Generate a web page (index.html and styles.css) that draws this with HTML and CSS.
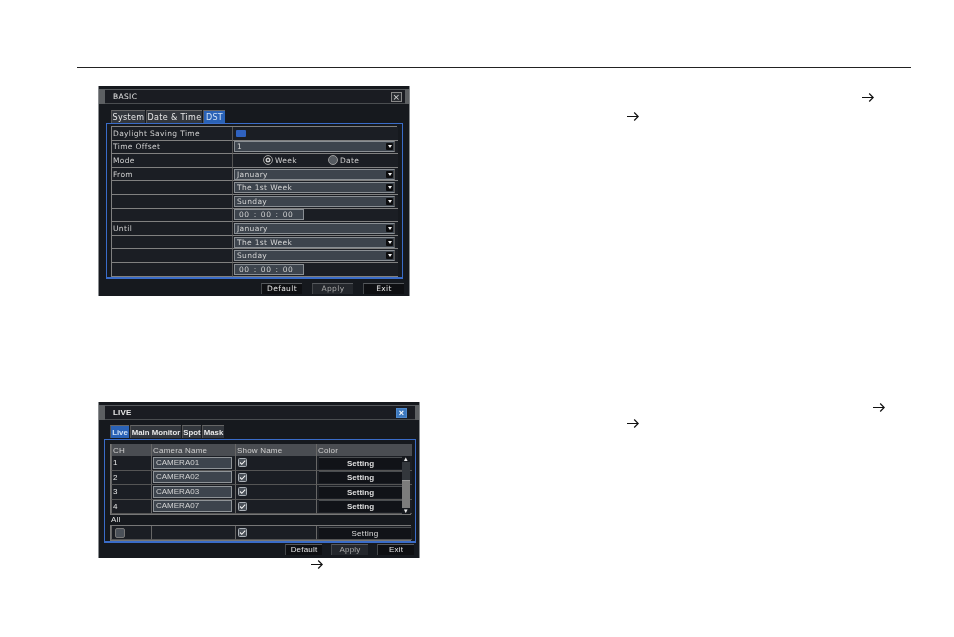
FILE: index.html
```html
<!DOCTYPE html>
<html lang="en">
<head>
  <meta charset="UTF-8">
  <title>BASIC / LIVE</title>
  <link rel="stylesheet" href="styles.css">
</head>
<body>

  <svg class="defs" width="0" height="0">
    <symbol id="arrow" viewBox="0 0 12 11">
      <path d="M0 5.5H11M7.2 1.5L11.2 5.5L7.2 9.5" fill="none" stroke="#111" stroke-width="1.2"/>
    </symbol>
    <symbol id="tick" viewBox="0 0 9 9">
      <rect x="0.5" y="0.5" width="8" height="8" rx="1" fill="#4a5058" stroke="#aab0b6"/>
      <path d="M2 4.5L3.8 6.3L7.2 2.6" fill="none" stroke="#f2f2f2" stroke-width="1.1"/>
    </symbol>
  </svg>

  <div class="rule"></div>

  <section class="entry entry-basic">
    <div class="dvr dvr-basic">
      <div class="titlebar"><span>BASIC</span><span class="close">×</span></div>
      <div class="tabs">
        <span class="tab tab-system">System</span>
        <span class="tab tab-date">Date &amp; Time</span>
        <span class="tab tab-dst active">DST</span>
      </div>
      <div class="frame">
        <div class="form">
          <div class="cell">Daylight Saving Time</div><div class="cell"><span class="check-on"></span></div>
          <div class="cell">Time Offset</div><div class="cell"><span class="select">1</span></div>
          <div class="cell">Mode</div>
          <div class="cell radios">
            <span class="radio selected"></span><span class="radio-label">Week</span>
            <span class="radio radio-date"></span><span class="radio-label">Date</span>
          </div>
          <div class="cell">From</div><div class="cell"><span class="select">January</span></div>
          <div class="cell"></div><div class="cell"><span class="select">The 1st Week</span></div>
          <div class="cell"></div><div class="cell"><span class="select">Sunday</span></div>
          <div class="cell"></div><div class="cell"><span class="time">00 : 00 : 00</span></div>
          <div class="cell">Until</div><div class="cell"><span class="select">January</span></div>
          <div class="cell"></div><div class="cell"><span class="select">The 1st Week</span></div>
          <div class="cell"></div><div class="cell"><span class="select">Sunday</span></div>
          <div class="cell"></div><div class="cell"><span class="time">00 : 00 : 00</span></div>
        </div>
      </div>
      <div class="actions">
        <span class="btn">Default</span>
        <span class="btn dim">Apply</span>
        <span class="btn">Exit</span>
      </div>
    </div>
    <div class="notes">
      <div class="note-line note-a"><svg class="arrow"><use href="#arrow"/></svg></div>
      <div class="note-line note-b"><svg class="arrow"><use href="#arrow"/></svg></div>
    </div>
  </section>

  <section class="entry entry-live">
    <div>
      <div class="dvr dvr-live">
        <div class="titlebar"><span>LIVE</span><span class="close close-blue">×</span></div>
        <div class="tabs">
          <span class="tab tab-live active">Live</span>
          <span class="tab tab-main">Main Monitor</span>
          <span class="tab tab-spot">Spot</span>
          <span class="tab tab-mask">Mask</span>
        </div>
        <div class="frame">
          <div class="grid-wrap">
            <div class="grid">
              <div class="head">CH</div><div class="head">Camera Name</div><div class="head">Show Name</div><div class="head">Color</div>
              <div class="td">1</div><div class="td"><span class="name">CAMERA01</span></div><div class="td"><svg class="tick"><use href="#tick"/></svg></div><div class="td color"><span class="setting">Setting</span></div>
              <div class="td">2</div><div class="td"><span class="name">CAMERA02</span></div><div class="td"><svg class="tick"><use href="#tick"/></svg></div><div class="td color"><span class="setting">Setting</span></div>
              <div class="td">3</div><div class="td"><span class="name">CAMERA03</span></div><div class="td"><svg class="tick"><use href="#tick"/></svg></div><div class="td color"><span class="setting">Setting</span></div>
              <div class="td">4</div><div class="td"><span class="name">CAMERA07</span></div><div class="td"><svg class="tick"><use href="#tick"/></svg></div><div class="td color"><span class="setting">Setting</span></div>
            </div>
            <div class="scrollbar">
              <span class="scroll-btn">▴</span>
              <span class="scroll-thumb"></span>
              <span class="scroll-track"></span>
              <span class="scroll-btn">▾</span>
            </div>
          </div>
          <div class="all-label">All</div>
          <div class="grid grid-all">
            <div class="td"><span class="check-off"></span></div><div class="td"></div><div class="td"><svg class="tick"><use href="#tick"/></svg></div><div class="td color"><span class="setting setting-wide">Setting</span></div>
          </div>
        </div>
        <div class="actions">
          <span class="btn">Default</span>
          <span class="btn dim">Apply</span>
          <span class="btn">Exit</span>
        </div>
      </div>
      <div class="note-under"><svg class="arrow"><use href="#arrow"/></svg></div>
    </div>
    <div class="notes">
      <div class="note-line note-c"><svg class="arrow"><use href="#arrow"/></svg></div>
      <div class="note-line note-d"><svg class="arrow"><use href="#arrow"/></svg></div>
    </div>
  </section>

</body>
</html>
```

FILE: styles.css
```css
body {
  margin: 0;
  background: #fff;
  font-family: 'Liberation Sans', Arial, sans-serif;
  color: #111;
}

.defs {
  position: absolute;
}

.rule {
  height: 1px;
  margin: 67px 43px 0 77px;
  background: #222;
}

.entry {
  display: flex;
  margin-left: 98px;
}

.entry-basic {
  margin-top: 18px;
}

.entry-live {
  margin-top: 106px;
}

.arrow {
  display: block;
  width: 12px;
  height: 11px;
}

.notes {
  flex: 1;
}

.note-line {
  height: 11px;
}

.note-a { margin: 6px 0 0 452px; }
.note-b { margin: 8px 0 0 217px; }
.note-c { margin: 0 0 0 453px; }
.note-d { margin: 5px 0 0 207px; }

.note-under {
  margin: 1px 0 0 213px;
}

/* DVR dialogs */
.dvr {
  box-sizing: border-box;
  background: linear-gradient(#16191e 3px, #5c5f62 3px, #5c5f62 18px, #16191e 18px);
  border-left: 1px solid #8a8d90;
  border-right: 1px solid #8a8d90;
  color: #d0d0d0;
  filter: blur(0.5px);
  overflow: hidden;
}

.dvr-basic {
  width: 312px;
  height: 210px;
  font-family: 'DejaVu Sans', sans-serif;
  font-size: 7.5px;
  letter-spacing: 0.35px;
}

.dvr-live {
  width: 322px;
  height: 156px;
  font-size: 8px;
  letter-spacing: 0.2px;
}

.titlebar {
  display: flex;
  align-items: center;
  justify-content: space-between;
  box-sizing: border-box;
  height: 15px;
  margin: 3px 4px 0 6px;
  padding: 0 3px 0 8px;
  background: #1a1c22;
  border-top: 1px solid #55585c;
  border-bottom: 1px solid #4a4d50;
  color: #e6e6e6;
}

.dvr-live .titlebar {
  font-weight: bold;
  padding-right: 8px;
}

.close {
  width: 11px;
  height: 10px;
  border: 1px solid #888;
  background: #2a2d32;
  color: #ddd;
  font-size: 9px;
  line-height: 9px;
  text-align: center;
  box-sizing: border-box;
}

.close-blue {
  background: #3d78bd;
  border-color: #4e88cc;
  color: #fff;
}

.tabs {
  display: flex;
  gap: 1px;
  height: 13px;
  margin: 6px 0 0 12px;
  font-size: 8px;
}

.dvr-live .tabs {
  margin: 5px 0 1px 11px;
  font-weight: bold;
  font-size: 7.8px;
  letter-spacing: 0;
}

.tab {
  display: flex;
  align-items: center;
  justify-content: center;
  box-sizing: border-box;
  white-space: nowrap;
  background: #33373d;
  border-top: 1px solid #666;
  border-left: 1px solid #555;
  color: #e8e8e8;
}

.tab.active {
  background: #2a62b6;
  color: #cfe0f5;
}

.tab-system { width: 34px; }
.tab-date { width: 56px; }
.tab-dst { width: 22px; }
.tab-live { width: 19px; }
.tab-main { width: 51px; }
.tab-spot { width: 19px; }
.tab-mask { width: 22px; }

.frame {
  box-sizing: border-box;
  border: 1px solid #3a6cc8;
  border-bottom-width: 2px;
  margin-left: 7px;
}

.dvr-basic .frame {
  width: 297px;
  height: 156px;
  padding: 2px 5px 0 4px;
}

.dvr-live .frame {
  width: 312px;
  height: 104px;
  margin-left: 5px;
  padding: 4px 4px 0 5px;
}

.form {
  display: grid;
  grid-template-columns: 120px 166px;
  grid-auto-rows: 13.6px;
  border-top: 1px solid #808080;
  border-left: 1px solid #808080;
  border-right: 1px solid #808080;
}

.cell {
  display: flex;
  align-items: center;
  box-sizing: border-box;
  padding-left: 1px;
  background: #1b1e24;
  border-bottom: 1px solid #808080;
}

.cell:nth-child(even) {
  border-left: 1px solid #555;
}

.check-on {
  width: 10px;
  height: 7px;
  margin-left: 2px;
  border-radius: 1px;
  background: #2f62c0;
}

.select {
  position: relative;
  box-sizing: border-box;
  display: block;
  width: 161px;
  height: 11px;
  padding-left: 2px;
  line-height: 9px;
  background: #3d444d;
  border: 1px solid #8a8f94;
  border-right-color: #555;
  color: #d4d4d4;
}

.select::after {
  content: '';
  position: absolute;
  right: 1px;
  top: 1px;
  width: 7px;
  height: 7px;
  background: #0c0c0e;
  border-radius: 1px;
}

.select::before {
  content: '';
  position: absolute;
  z-index: 1;
  right: 2px;
  top: 3px;
  border-left: 2.5px solid transparent;
  border-right: 2.5px solid transparent;
  border-top: 3px solid #f2f2f2;
}

.time {
  box-sizing: border-box;
  display: block;
  width: 70px;
  height: 11px;
  padding-left: 4px;
  line-height: 9px;
  letter-spacing: 0.6px;
  word-spacing: 1px;
  background: #3d444d;
  border: 1px solid #8a8f94;
}

.radios {
  padding-left: 30px;
}

.radio {
  box-sizing: border-box;
  width: 10px;
  height: 10px;
  margin-right: 2px;
  border-radius: 50%;
  border: 1px solid #9a9a9a;
  background: #555a60;
}

.radio.selected {
  background: #15181c;
  box-shadow: inset 0 0 0 1.5px #15181c, inset 0 0 0 3px #c8c8c8;
}

.radio-date {
  margin-left: 31px;
}

.actions {
  display: flex;
  justify-content: flex-end;
  gap: 10px;
  margin-top: 4px;
  padding-right: 5px;
}

.btn {
  box-sizing: border-box;
  width: 41px;
  height: 11px;
  text-align: center;
  line-height: 9px;
  background: #0e0f12;
  border-top: 1px solid #55585c;
  border-left: 1px solid #44474a;
  color: #e2e2e2;
}

.btn.dim {
  background: #24272c;
  color: #a8a8a8;
}

.dvr-live .actions {
  gap: 9px;
  margin-top: 1px;
  padding-right: 5px;
}

.dvr-live .btn {
  width: 37px;
  line-height: 10px;
}

.grid-wrap {
  position: relative;
}

.grid {
  display: grid;
  grid-template-columns: 40px 84px 81px 96px;
  grid-template-rows: 12px repeat(4, 14.5px);
  border: 1px solid #777;
  border-top: 0;
}

.head {
  display: flex;
  align-items: center;
  padding-left: 1px;
  background: #4a4d52;
  border-left: 1px solid #666;
  color: #cfcfcf;
}

.td {
  display: flex;
  align-items: center;
  box-sizing: border-box;
  padding-left: 1px;
  background: #1b1e24;
  border-bottom: 1px solid #555;
  border-left: 1px solid #666;
  color: #e8e8e8;
}

.name {
  box-sizing: border-box;
  display: block;
  width: 79px;
  height: 12px;
  padding-left: 2px;
  line-height: 10px;
  letter-spacing: 0;
  background: #3d444d;
  border: 1px solid #8f9498;
  color: #d4d4d4;
}

.tick {
  width: 9px;
  height: 9px;
  margin-left: 1px;
}

.color {
  padding-left: 2px;
}

.setting {
  display: block;
  width: 83px;
  height: 12px;
  line-height: 11px;
  text-align: center;
  letter-spacing: 0;
  background: #111318;
  border-top: 1px solid #4a4d50;
  box-sizing: border-box;
  font-weight: bold;
  color: #dedede;
}

.setting-wide {
  width: 92px;
  font-weight: normal;
  letter-spacing: 0.3px;
}

.scrollbar {
  position: absolute;
  top: 12px;
  right: 1px;
  display: flex;
  flex-direction: column;
  width: 8px;
  height: 58px;
  background: #7c7c7c;
}

.scroll-btn {
  height: 6px;
  font-size: 7px;
  line-height: 6px;
  text-align: center;
  background: #16191e;
  color: #eee;
}

.scroll-thumb {
  height: 18px;
  background: #33373c;
  border-bottom: 1px solid #999;
}

.scroll-track {
  flex: 1;
}

.all-label {
  height: 10px;
  line-height: 10px;
  padding-left: 1px;
  color: #e0e0e0;
}

.grid-all {
  grid-template-rows: 14px;
  border-top: 1px solid #777;
}

.check-off {
  width: 10px;
  height: 10px;
  margin-left: 2px;
  border: 1px solid #777;
  border-radius: 2px;
  background: #4a5058;
  box-sizing: border-box;
}
```
